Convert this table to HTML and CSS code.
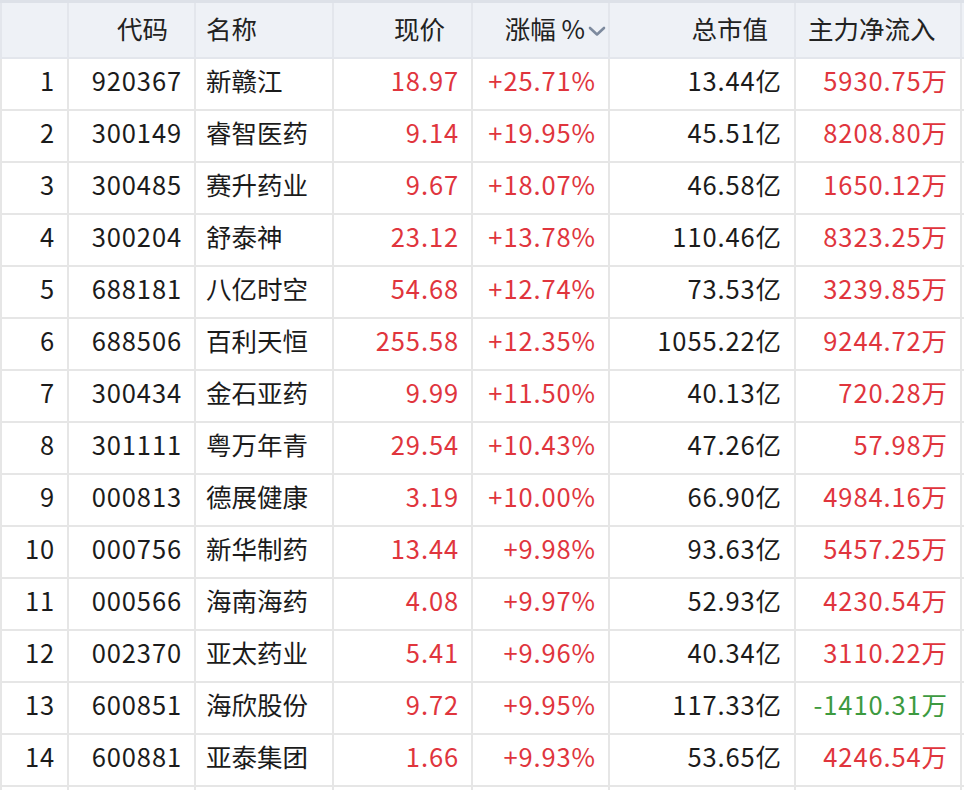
FILE: index.html
```html
<!DOCTYPE html>
<html lang="zh-CN">
<head>
<meta charset="utf-8">
<link rel="stylesheet" href="styles.css">
</head>
<body>
<table class="quotes">
  <colgroup>
    <col class="c-idx"><col class="c-code"><col class="c-name"><col class="c-price"><col class="c-chg"><col class="c-cap"><col class="c-flow"><col class="c-rest">
  </colgroup>
  <thead>
    <tr>
      <th></th>
      <th class="num">代码</th>
      <th class="txt">名称</th>
      <th class="num">现价</th>
      <th class="num sorted">涨幅 %<svg class="arrow" width="20" height="14" viewBox="0 0 20 14"><path d="M3 4 L10 10.5 L17 4" fill="none" stroke="#7d8a9e" stroke-width="2.6" stroke-linecap="round" stroke-linejoin="round"/></svg></th>
      <th class="num">总市值</th>
      <th class="num">主力净流入</th>
      <th class="rest"></th>
    </tr>
  </thead>
  <tbody>
    <tr><td class="num">1</td><td class="num">920367</td><td class="txt">新赣江</td><td class="num up">18.97</td><td class="num up">+25.71%</td><td class="num">13.44亿</td><td class="num up">5930.75万</td><td class="rest"></td></tr>
    <tr><td class="num">2</td><td class="num">300149</td><td class="txt">睿智医药</td><td class="num up">9.14</td><td class="num up">+19.95%</td><td class="num">45.51亿</td><td class="num up">8208.80万</td><td class="rest"></td></tr>
    <tr><td class="num">3</td><td class="num">300485</td><td class="txt">赛升药业</td><td class="num up">9.67</td><td class="num up">+18.07%</td><td class="num">46.58亿</td><td class="num up">1650.12万</td><td class="rest"></td></tr>
    <tr><td class="num">4</td><td class="num">300204</td><td class="txt">舒泰神</td><td class="num up">23.12</td><td class="num up">+13.78%</td><td class="num">110.46亿</td><td class="num up">8323.25万</td><td class="rest"></td></tr>
    <tr><td class="num">5</td><td class="num">688181</td><td class="txt">八亿时空</td><td class="num up">54.68</td><td class="num up">+12.74%</td><td class="num">73.53亿</td><td class="num up">3239.85万</td><td class="rest"></td></tr>
    <tr><td class="num">6</td><td class="num">688506</td><td class="txt">百利天恒</td><td class="num up">255.58</td><td class="num up">+12.35%</td><td class="num">1055.22亿</td><td class="num up">9244.72万</td><td class="rest"></td></tr>
    <tr><td class="num">7</td><td class="num">300434</td><td class="txt">金石亚药</td><td class="num up">9.99</td><td class="num up">+11.50%</td><td class="num">40.13亿</td><td class="num up">720.28万</td><td class="rest"></td></tr>
    <tr><td class="num">8</td><td class="num">301111</td><td class="txt">粤万年青</td><td class="num up">29.54</td><td class="num up">+10.43%</td><td class="num">47.26亿</td><td class="num up">57.98万</td><td class="rest"></td></tr>
    <tr><td class="num">9</td><td class="num">000813</td><td class="txt">德展健康</td><td class="num up">3.19</td><td class="num up">+10.00%</td><td class="num">66.90亿</td><td class="num up">4984.16万</td><td class="rest"></td></tr>
    <tr><td class="num">10</td><td class="num">000756</td><td class="txt">新华制药</td><td class="num up">13.44</td><td class="num up">+9.98%</td><td class="num">93.63亿</td><td class="num up">5457.25万</td><td class="rest"></td></tr>
    <tr><td class="num">11</td><td class="num">000566</td><td class="txt">海南海药</td><td class="num up">4.08</td><td class="num up">+9.97%</td><td class="num">52.93亿</td><td class="num up">4230.54万</td><td class="rest"></td></tr>
    <tr><td class="num">12</td><td class="num">002370</td><td class="txt">亚太药业</td><td class="num up">5.41</td><td class="num up">+9.96%</td><td class="num">40.34亿</td><td class="num up">3110.22万</td><td class="rest"></td></tr>
    <tr><td class="num">13</td><td class="num">600851</td><td class="txt">海欣股份</td><td class="num up">9.72</td><td class="num up">+9.95%</td><td class="num">117.33亿</td><td class="num down">-1410.31万</td><td class="rest"></td></tr>
    <tr><td class="num">14</td><td class="num">600881</td><td class="txt">亚泰集团</td><td class="num up">1.66</td><td class="num up">+9.93%</td><td class="num">53.65亿</td><td class="num up">4246.54万</td><td class="rest"></td></tr>
    <tr><td class="num"></td><td class="num"></td><td class="txt"></td><td class="num"></td><td class="num"></td><td class="num"></td><td class="num"></td><td class="rest"></td></tr>
  </tbody>
</table>
</body>
</html>
```
FILE: styles.css
```css
html, body {
  margin: 0;
  padding: 0;
  background: #ffffff;
  overflow: hidden;
}

.quotes {
  table-layout: fixed;
  width: 966px;
  border-collapse: collapse;
  font-family: "Noto Sans CJK SC", "Noto Sans", sans-serif;
  font-size: 25.5px;
  line-height: 30px;
  color: #1b1b1b;
}

.c-idx { width: 67px; }
.c-code { width: 127px; }
.c-name { width: 138px; }
.c-price { width: 139px; }
.c-chg { width: 137px; }
.c-cap { width: 186px; }
.c-flow { width: 166px; }
.c-rest { width: 6px; }

.quotes th,
.quotes td {
  border: 2px solid #e6e6e6;
  white-space: nowrap;
  overflow: hidden;
  padding: 0 12px 7px;
}

.quotes thead tr {
  height: 56px;
  background: #eef1f6;
}

.quotes th {
  font-weight: normal;
  color: #222222;
  border-color: #e3e6ec;
  border-top: 3px solid #dde1e8;
  padding-right: 26px;
  padding-bottom: 4px;
}

.quotes tbody tr {
  height: 52px;
}

.quotes td {
  letter-spacing: 0.9px;
}

.quotes .num { text-align: right; }
.quotes .txt { text-align: left; padding-left: 10px; letter-spacing: 0; }

.quotes th.sorted {
  padding-right: 1px;
}

.arrow {
  display: inline-block;
  vertical-align: middle;
  margin-left: 2px;
  margin-top: -2px;
}

.quotes .rest {
  padding: 0;
}

.up { color: #e0353d; }
.down { color: #3d9a40; }
```
